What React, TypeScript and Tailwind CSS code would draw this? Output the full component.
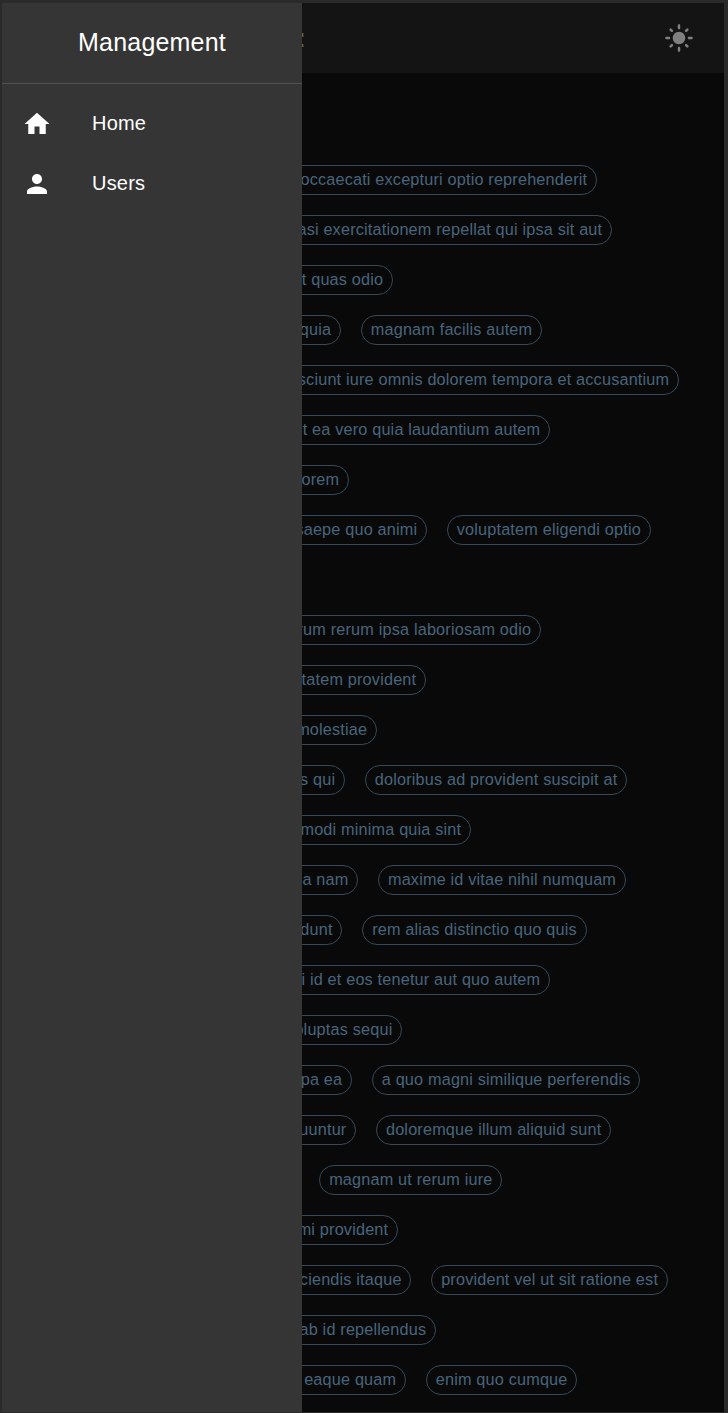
import React from "react";
import { MdLightMode } from "react-icons/md";

type Row = { end: number; chips: string[] };

const firstGroup: Row[] = [
  { end: 295, chips: ["et occaecati excepturi optio reprehenderit"] },
  { end: 310, chips: ["quasi exercitationem repellat qui ipsa sit aut"] },
  { end: 91, chips: ["ut et quas odio"] },
  { end: 39, chips: ["et quia", "magnam facilis autem"] },
  { end: 377, chips: ["nesciunt iure omnis dolorem tempora et accusantium"] },
  { end: 248, chips: ["ut ea vero quia laudantium autem"] },
  { end: 47, chips: ["dolorem"] },
  { end: 125, chips: ["et saepe quo animi", "voluptatem eligendi optio"] },
];

const secondGroup: Row[] = [
  { end: 239, chips: ["earum rerum ipsa laboriosam odio"] },
  { end: 124, chips: ["voluptatem provident"] },
  { end: 75, chips: ["et molestiae"] },
  { end: 43, chips: ["quis qui", "doloribus ad provident suscipit at"] },
  { end: 169, chips: ["commodi minima quia sint"] },
  { end: 56.2, chips: ["quia nam", "maxime id vitae nihil numquam"] },
  { end: 40.4, chips: ["incidunt", "rem alias distinctio quo quis"] },
  { end: 248, chips: ["qui id et eos tenetur aut quo autem"] },
  { end: 100.2, chips: ["voluptas sequi"] },
  { end: 50, chips: ["culpa ea", "a quo magni similique perferendis"] },
  { end: 54.2, chips: ["sequuntur", "doloremque illum aliquid sunt"] },
  { end: -2.6, chips: ["", "magnam ut rerum iure"] },
  { end: 96, chips: ["animi provident"] },
  { end: 109.4, chips: ["reiciendis itaque", "provident vel ut sit ratione est"] },
  { end: 134, chips: ["et ab id repellendus"] },
  { end: 104, chips: ["ut eaque quam", "enim quo cumque"] },
];

function Chip({ label }: { label: string }) {
  return (
    <span className="flex h-[30px] shrink-0 items-center whitespace-nowrap rounded-full border border-[#35495a] px-[8.75px] pb-[2px] text-[16.25px] leading-none tracking-[0.01071em] text-[#48657d]">
      {label}
    </span>
  );
}

function ChipRow({ row }: { row: Row }) {
  const [first, second] = row.chips;
  return (
    <div className="flex h-[30px]">
      <div
        className="flex shrink-0 justify-end overflow-hidden"
        style={{ width: Math.max(row.end, 0), marginRight: Math.min(row.end, 0) }}
      >
        {first && <Chip label={first} />}
      </div>
      {second && (
        <div className="ml-5 flex">
          <Chip label={second} />
        </div>
      )}
    </div>
  );
}

function NavItem({ label, path }: { label: string; path: string }) {
  return (
    <a className="flex h-[60px] items-center pl-5 text-xl tracking-[0.00938em] text-white">
      <svg viewBox="0 0 24 24" className="mr-10 size-[30px] fill-white">
        <path d={path} />
      </svg>
      <span className="pb-[2px]">{label}</span>
    </a>
  );
}

export default function App() {
  return (
    <div className="flex h-[1413px] w-[728px] overflow-hidden bg-[#2a2a2a] pt-[3px] pr-1 pb-px pl-[2px] font-['Liberation_Sans',Arial,sans-serif]">
      <aside className="w-[300px] shrink-0 bg-[#353535]">
        <h1 className="flex h-[81px] items-center justify-center border-b border-[#505050] text-[25px] tracking-[0.0075em] text-white">
          Management
        </h1>
        <nav className="pt-[10px]">
          <NavItem label="Home" path="M10 20v-6h4v6h5v-8h3L12 3 2 12h3v8z" />
          <NavItem
            label="Users"
            path="M12 12c2.21 0 4-1.79 4-4s-1.79-4-4-4-4 1.79-4 4 1.79 4 4 4m0 2c-2.67 0-8 1.34-8 4v2h16v-2c0-2.66-5.33-4-8-4"
          />
        </nav>
      </aside>
      <main className="min-w-0 flex-1 overflow-hidden bg-[#090909]">
        <header className="flex h-[70px] items-center justify-between bg-[#141414] pr-[30px]">
          <div className="flex flex-col gap-[7px] pt-1">
            <span className="h-1 w-[2px] border-r border-[#3a321f] bg-[#6b5e3c]" />
            <span className="h-[3px] w-[2px] border-r border-[#3a321f] bg-[#6b5e3c]" />
          </div>
          <MdLightMode className="size-[30px] text-[#808080]" />
        </header>
        <section className="mt-[92px] flex flex-col gap-5">
          {firstGroup.map((row) => (
            <ChipRow key={row.chips.join()} row={row} />
          ))}
        </section>
        <section className="mt-[70px] flex flex-col gap-5">
          {secondGroup.map((row) => (
            <ChipRow key={row.chips.join()} row={row} />
          ))}
        </section>
      </main>
    </div>
  );
}
